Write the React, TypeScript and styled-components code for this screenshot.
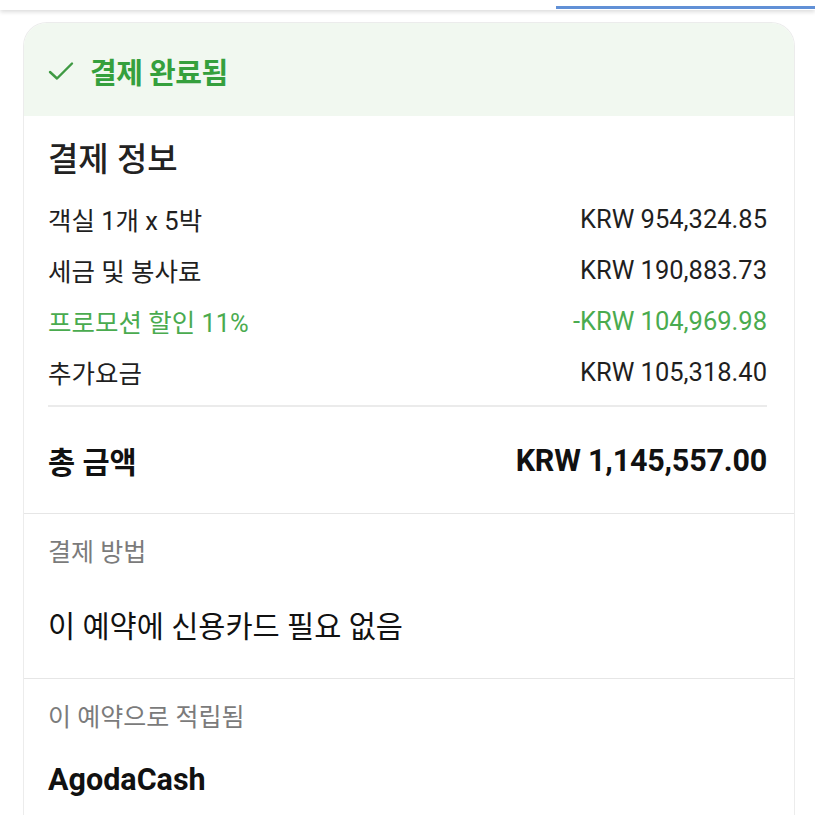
import React from "react";
import styled, { createGlobalStyle } from "styled-components";

const Global = createGlobalStyle`
  html, body { margin: 0; padding: 0; background: #ffffff; }
  body { font-family: Roboto, "Noto Sans CJK KR", "Noto Sans", sans-serif; color: #1f1f1f; }
  * { box-sizing: border-box; }
`;

const Page = styled.div`
  width: 815px;
  height: 815px;
  overflow: hidden;
  background: #ffffff;
  display: flex;
  flex-direction: column;
`;

const TopBar = styled.div`
  height: 10px;
  background: #ffffff;
  box-shadow: 0 2px 4px rgba(0, 0, 0, 0.14);
  display: flex;
  justify-content: flex-end;
  align-items: flex-start;
  position: relative;
  z-index: 2;
`;

const TabIndicator = styled.div`
  width: 259px;
  height: 3px;
  margin-top: 6px;
  background: #6190d6;
`;

const Card = styled.div`
  margin: 12px 20px 0 23px;
  border: 1px solid #ececec;
  border-bottom: none;
  border-radius: 24px 24px 0 0;
  overflow: hidden;
  background: #ffffff;
  flex: 1;
`;

const StatusHeader = styled.div`
  height: 93px;
  background: #f1f8f0;
  display: flex;
  align-items: center;
  gap: 16px;
  padding-left: 24px;
  padding-top: 2px;
`;

const StatusText = styled.span`
  font-size: 29px;
  font-weight: 700;
  color: #35a03d;
  letter-spacing: -0.5px;
`;

const Section = styled.div<{ $pt: number; $h: number }>`
  padding: ${(p) => p.$pt}px 27px 0 24px;
  height: ${(p) => p.$h}px;
  border-bottom: 1px solid #e6e6e6;
  display: flex;
  flex-direction: column;
`;

const Title = styled.div`
  font-size: 33px;
  font-weight: 500;
  line-height: 40px;
  color: #222;
  margin-bottom: 13px;
`;

const Row = styled.div<{ $green?: boolean }>`
  height: 51px;
  display: flex;
  align-items: center;
  justify-content: space-between;
  font-size: 25.5px;
  color: ${(p) => (p.$green ? "#4aab4f" : "#1f1f1f")};
`;

const Divider = styled.div`
  height: 2px;
  background: #ebebeb;
  margin-top: 8px;
`;

const TotalRow = styled.div`
  height: 106px;
  display: flex;
  align-items: center;
  justify-content: space-between;
  font-weight: 700;
  color: #111;
`;

const TotalLabel = styled.span`
  font-size: 29.5px;
`;

const TotalValue = styled.span`
  font-size: 30.5px;
  letter-spacing: -0.2px;
`;

const Label = styled.div`
  font-size: 25px;
  line-height: 30px;
  color: #7b7b7b;
`;

const Body = styled.div<{ $mt: number; $bold?: boolean }>`
  margin-top: ${(p) => p.$mt}px;
  font-size: ${(p) => (p.$bold ? 30.5 : 29.5)}px;
  font-weight: ${(p) => (p.$bold ? 700 : 400)};
  line-height: 36px;
  color: #111;
`;

const Check = () => (
  <svg width="26" height="20" viewBox="0 0 26 20" fill="none">
    <path d="M2 11 L9 17.5 L24 2.5" stroke="#3f9a43" strokeWidth="2.4" strokeLinecap="round" strokeLinejoin="round" />
  </svg>
);

const rows = [
  { label: "객실 1개 x 5박", value: "KRW 954,324.85" },
  { label: "세금 및 봉사료", value: "KRW 190,883.73" },
  { label: "프로모션 할인 11%", value: "-KRW 104,969.98", green: true },
  { label: "추가요금", value: "KRW 105,318.40" },
];

export default function App() {
  return (
    <>
      <Global />
      <Page>
        <TopBar>
          <TabIndicator />
        </TopBar>
        <Card>
          <StatusHeader>
            <Check />
            <StatusText>결제 완료됨</StatusText>
          </StatusHeader>
          <Section $pt={24} $h={398}>
            <Title>결제 정보</Title>
            {rows.map((r) => (
              <Row key={r.label} $green={r.green}>
                <span>{r.label}</span>
                <span>{r.value}</span>
              </Row>
            ))}
            <Divider />
            <TotalRow>
              <TotalLabel>총 금액</TotalLabel>
              <TotalValue>KRW 1,145,557.00</TotalValue>
            </TotalRow>
          </Section>
          <Section $pt={24} $h={165}>
            <Label>결제 방법</Label>
            <Body $mt={41}>이 예약에 신용카드 필요 없음</Body>
          </Section>
          <Section $pt={24} $h={200}>
            <Label>이 예약으로 적립됨</Label>
            <Body $mt={29} $bold>AgodaCash</Body>
          </Section>
        </Card>
      </Page>
    </>
  );
}
